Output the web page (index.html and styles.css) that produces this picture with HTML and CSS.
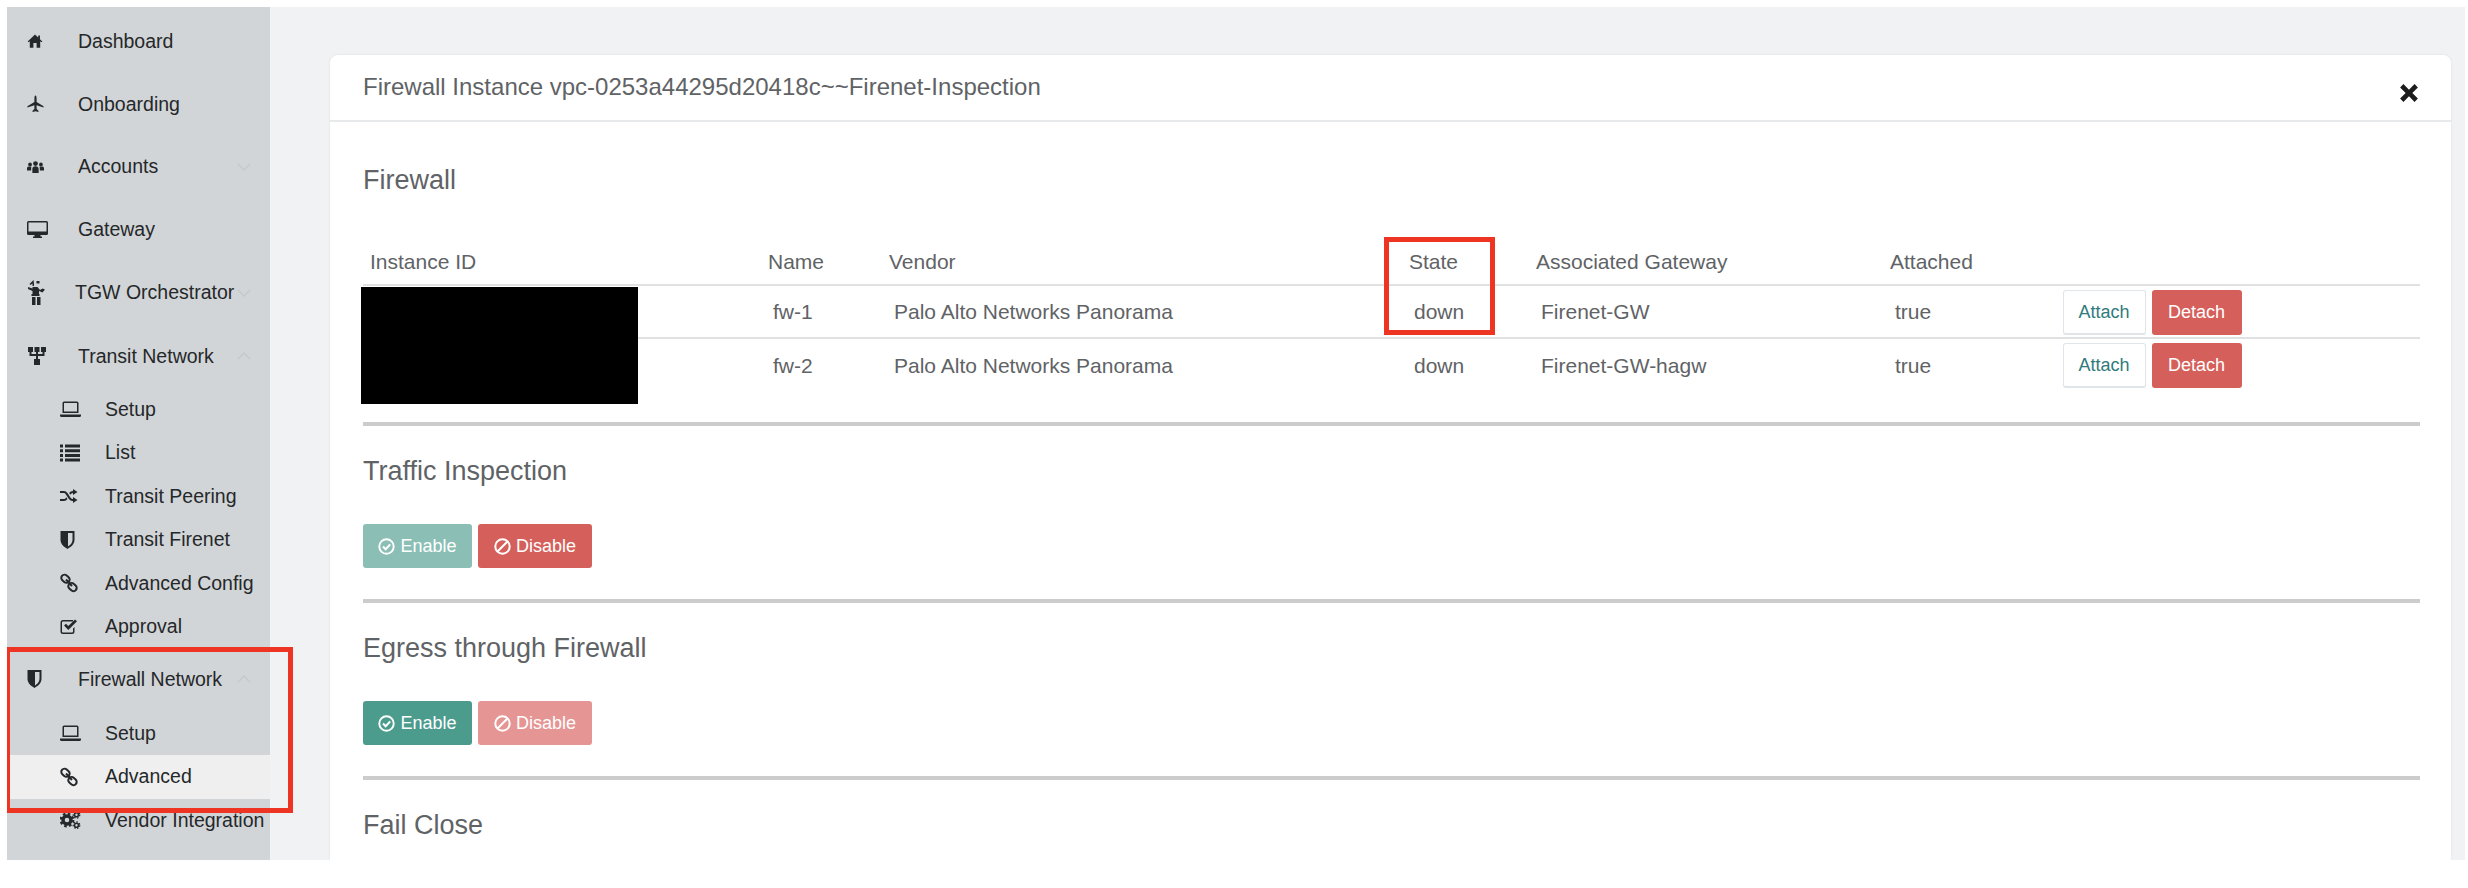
FILE: index.html
```html
<!DOCTYPE html>
<html lang="en">

<head>
    <meta charset="UTF-8">
    <title>Firewall Instance</title>
    <link rel="stylesheet" href="styles.css">
</head>

<body>
    <svg class="sprites" width="0" height="0">
        <symbol id="i-home" viewBox="0 0 20 20"><path d="M10 2 .8 10.6l1 1.1L3.500 10.200V18.500H8V12.500H12V18.500H16.500V10.200l1.700 1.500 1-1.100-3-2.800V3H14V5.500Z"/></symbol>
        <symbol id="i-plane" viewBox="0 0 20 20"><path d="M10 0c1 0 1.300 2 1.300 4v3.500l8.200 5V14l-8.200-2.500V16l2.200 2v1.500L10 18.500l-3.500 1V18l2.200-2v-4.500L.5 14v-1.500l8.200-5V4C8.700 2 9 0 10 0Z"/></symbol>
        <symbol id="i-users" viewBox="0 0 20 16"><circle cx="10" cy="4" r="2.800"/><circle cx="3.600" cy="5" r="2.200"/><circle cx="16.400" cy="5" r="2.200"/><path d="M6.300 15V10c0-2 1.500-3 3.700-3s3.700 1 3.700 3v5ZM0 12V9.500C0 8 1.200 7.500 3.500 7.500c.7 0 1.300.1 1.800.3-.3.6-.4 1.300-.4 2.200V12ZM20 12V9.500c0-1.500-1.200-2-3.500-2-.7 0-1.300.1-1.800.3.300.6.4 1.300.4 2.200V12Z"/></symbol>
        <symbol id="i-desktop" viewBox="0 0 21 18"><path fill-rule="evenodd" d="M1.500 0h18A1.500 1.500 0 0 1 21 1.500v11a1.500 1.500 0 0 1-1.500 1.500H13.500v1.500H15V17H6v-1.500H7.500V14H1.500A1.500 1.500 0 0 1 0 12.500v-11A1.500 1.500 0 0 1 1.500 0ZM1.500 1.500V10.500H19.500V1.500Z"/></symbol>
        <symbol id="i-tgw" viewBox="0 0 18 25"><path d="M6 0 2 4l1 1 2-1.500V6H6.500V3.500ZM9 1h3v2.500H9ZM.5 7 5 8.500V7H10l2.500 3L15 8.500l2.500 1L15 12.500 11.500 11V14H12v2H4v-2H5V11L.5 9Z"/><rect x="4.500" y="17" width="3.500" height="8"/><rect x="9.500" y="17" width="3.500" height="8"/></symbol>
        <symbol id="i-sitemap" viewBox="0 0 20 18"><path d="M1 0H6V5H4.500V7H9V5H7.500V0H12.500V5H11V7H15.500V5H14V0H19V5H17.500V9H11V12H13V18H7V12H9V9H2.500V5H1Z"/></symbol>
        <symbol id="i-laptop" viewBox="0 0 21 17"><path fill-rule="evenodd" d="M4 1h13a1.500 1.500 0 0 1 1.500 1.500V12.500H2.500V2.500A1.500 1.500 0 0 1 4 1ZM4 2.500V11H17V2.500ZM0 14H21V15a1.500 1.500 0 0 1-1.500 1.500H1.500A1.500 1.500 0 0 1 0 15Z"/></symbol>
        <symbol id="i-list" viewBox="0 0 20 17"><path d="M0 0H3V3H0ZM5 0H20V3H5ZM0 4.700H3V7.700H0ZM5 4.700H20V7.700H5ZM0 9.400H3V12.400H0ZM5 9.400H20V12.400H5ZM0 14H3V17H0ZM5 14H20V17H5Z"/></symbol>
        <symbol id="i-random" viewBox="0 0 18 15"><path d="M0 2.500H4C6 2.500 7 3.800 8.500 6 10 8.500 11 10.500 13 10.500V8.500L17.500 11.500 13 14.500V12.500C10 12.500 8.500 10 7 7.700 6 6 5.200 4.500 4 4.500H0ZM0 10.500H4C5 10.500 5.700 9.700 6.300 8.700L7.500 10.500C6.500 11.800 5.500 12.500 4 12.500H0ZM13 .5 17.500 3.500 13 6.500V4.500C11.800 4.500 11 5.300 10.300 6.300L9.100 4.500C10.200 3.300 11.300 2.500 13 2.500Z"/></symbol>
        <symbol id="i-shield" viewBox="0 0 15 18"><path fill-rule="evenodd" d="M.5 0h14v9c0 4.500-4.500 7.500-7 9-2.500-1.500-7-4.500-7-9ZM8 2V15.500C10 14.200 12.500 12 12.500 9V2Z"/></symbol>
        <symbol id="i-link" viewBox="0 0 18 18"><g fill="none" stroke="currentColor" stroke-width="2"><rect x="1" y="1.500" width="9" height="6.500" rx="3.200" transform="rotate(42 5.500 4.700)"/><rect x="8" y="9.800" width="9" height="6.500" rx="3.200" transform="rotate(42 12.500 13)"/><path d="M6 5.500 12 12"/></g></symbol>
        <symbol id="i-check-square" viewBox="0 0 18 16"><path fill-rule="evenodd" d="M3 1H13V2.500H3A1 1 0 0 0 2 3.500V12.500A1 1 0 0 0 3 13.500H12A1 1 0 0 0 13 12.500V9.500L14.500 8V12.500A2.500 2.500 0 0 1 12 15H3A2.500 2.500 0 0 1 .5 12.500V3.500A2.500 2.500 0 0 1 3 1Z"/><path d="M4 6.500 6 4.700 8.300 7 15 .5 17 2.300 8.300 11Z"/></symbol>
        <symbol id="i-gears" viewBox="0 0 21 18"><g fill="none" stroke="currentColor"><circle cx="7" cy="9" r="4" stroke-width="3.400"/><circle cx="7" cy="9" r="6.300" stroke-width="2.200" stroke-dasharray="2.600 2.350"/><circle cx="16.500" cy="3.800" r="2" stroke-width="1.600"/><circle cx="16.500" cy="14.200" r="2" stroke-width="1.600"/><circle cx="16.500" cy="3.800" r="3.300" stroke-width="1.200" stroke-dasharray="1.500 1.500"/><circle cx="16.500" cy="14.200" r="3.300" stroke-width="1.200" stroke-dasharray="1.500 1.500"/></g></symbol>
        <symbol id="i-check-circle" viewBox="0 0 16 16"><g fill="none" stroke="currentColor" stroke-width="1.800"><circle cx="8" cy="8" r="6.800"/><path d="M4.700 8 7.200 10.500 11.500 6" stroke-width="2"/></g></symbol>
        <symbol id="i-ban" viewBox="0 0 16 16"><g fill="none" stroke="currentColor" stroke-width="1.900"><circle cx="8" cy="8" r="6.800"/><path d="M3.300 12.700 12.700 3.300"/></g></symbol>
    </svg>

    <div class="frame">
        <nav class="sidebar">
            <a class="nav-item"><span class="ico"><svg class="icon w16"><use href="#i-home"/></svg></span>Dashboard</a>
            <a class="nav-item"><span class="ico"><svg class="icon w17"><use href="#i-plane"/></svg></span>Onboarding</a>
            <a class="nav-item"><span class="ico"><svg class="icon w17"><use href="#i-users"/></svg></span>Accounts<svg class="chev" viewBox="0 0 14 8"><path d="M1 1 7 7 13 1"/></svg></a>
            <a class="nav-item"><span class="ico"><svg class="icon w21"><use href="#i-desktop"/></svg></span>Gateway</a>
            <a class="nav-item tight"><span class="ico"><svg class="icon w19"><use href="#i-tgw"/></svg></span>TGW Orchestrator<svg class="chev" viewBox="0 0 14 8"><path d="M1 1 7 7 13 1"/></svg></a>
            <a class="nav-item open"><span class="ico"><svg class="icon w20"><use href="#i-sitemap"/></svg></span>Transit Network<svg class="chev" viewBox="0 0 14 8"><path d="M1 7 7 1 13 7"/></svg></a>

            <a class="sub-item"><span class="ico"><svg class="icon w21"><use href="#i-laptop"/></svg></span>Setup</a>
            <a class="sub-item"><span class="ico"><svg class="icon w20"><use href="#i-list"/></svg></span>List</a>
            <a class="sub-item"><span class="ico"><svg class="icon w18"><use href="#i-random"/></svg></span>Transit Peering</a>
            <a class="sub-item"><span class="ico"><svg class="icon w15"><use href="#i-shield"/></svg></span>Transit Firenet</a>
            <a class="sub-item"><span class="ico"><svg class="icon w18"><use href="#i-link"/></svg></span>Advanced Config</a>
            <a class="sub-item"><span class="ico"><svg class="icon w18"><use href="#i-check-square"/></svg></span>Approval</a>

            <a class="nav-item open last"><span class="ico"><svg class="icon w15"><use href="#i-shield"/></svg></span>Firewall Network<svg class="chev" viewBox="0 0 14 8"><path d="M1 7 7 1 13 7"/></svg></a>
            <a class="sub-item"><span class="ico"><svg class="icon w21"><use href="#i-laptop"/></svg></span>Setup</a>
            <a class="sub-item active"><span class="ico"><svg class="icon w18"><use href="#i-link"/></svg></span>Advanced</a>
            <a class="sub-item"><span class="ico"><svg class="icon w21"><use href="#i-gears"/></svg></span>Vendor Integration</a>

            <div class="callout callout-nav"></div>
        </nav>

        <main class="content">
            <div class="card">
                <header class="card-header">
                    <h2>Firewall Instance vpc-0253a44295d20418c~~Firenet-Inspection</h2>
                    <svg class="close" viewBox="0 0 18 18"><path d="M4 1 9 6 14 1 17 4 12 9 17 14 14 17 9 12 4 17 1 14 6 9 1 4Z"/></svg>
                </header>

                <div class="card-body">
                    <h3 class="first">Firewall</h3>

                    <div class="table-wrap">
                        <table>
                            <thead>
                                <tr>
                                    <th class="c-id">Instance ID</th>
                                    <th class="c-name">Name</th>
                                    <th class="c-vendor">Vendor</th>
                                    <th class="c-state">State</th>
                                    <th class="c-gw">Associated Gateway</th>
                                    <th class="c-att">Attached</th>
                                    <th></th>
                                </tr>
                            </thead>
                            <tbody>
                                <tr>
                                    <td></td>
                                    <td>fw-1</td>
                                    <td>Palo Alto Networks Panorama</td>
                                    <td>down</td>
                                    <td>Firenet-GW</td>
                                    <td>true</td>
                                    <td class="actions"><button class="btn-sm attach">Attach</button><button class="btn-sm detach">Detach</button></td>
                                </tr>
                                <tr>
                                    <td></td>
                                    <td>fw-2</td>
                                    <td>Palo Alto Networks Panorama</td>
                                    <td>down</td>
                                    <td>Firenet-GW-hagw</td>
                                    <td>true</td>
                                    <td class="actions"><button class="btn-sm attach">Attach</button><button class="btn-sm detach">Detach</button></td>
                                </tr>
                            </tbody>
                        </table>
                        <div class="redacted"></div>
                        <div class="callout callout-state"></div>
                    </div>

                    <section class="block">
                        <h3>Traffic Inspection</h3>
                        <div class="btn-row">
                            <button class="btn enable faded"><svg class="btn-icon"><use href="#i-check-circle"/></svg>Enable</button>
                            <button class="btn disable"><svg class="btn-icon"><use href="#i-ban"/></svg>Disable</button>
                        </div>
                    </section>

                    <section class="block">
                        <h3>Egress through Firewall</h3>
                        <div class="btn-row">
                            <button class="btn enable"><svg class="btn-icon"><use href="#i-check-circle"/></svg>Enable</button>
                            <button class="btn disable faded"><svg class="btn-icon"><use href="#i-ban"/></svg>Disable</button>
                        </div>
                    </section>

                    <section class="block">
                        <h3>Fail Close</h3>
                    </section>
                </div>
            </div>
        </main>
    </div>
</body>

</html>
```

FILE: styles.css
```css
* {
    box-sizing: border-box;
}

body {
    background-color: #fff;
    color: #5f6366;
    font-family: "Liberation Sans", Arial, sans-serif;
    margin: 0;
    overflow: hidden;
}

.sprites {
    position: absolute;
}

.frame {
    display: flex;
    height: 853px;
    margin: 7px 3px 0 7px;
    overflow: hidden;
}

/* sidebar */
.sidebar {
    background-color: #d2d5d7;
    color: #25282a;
    flex: 0 0 263px;
    font-size: 19.500px;
    padding-top: 3px;
    position: relative;
}

.nav-item,
.sub-item {
    align-items: center;
    display: flex;
    white-space: nowrap;
}

.nav-item {
    height: 62.800px;
    padding-left: 20px;
}

.nav-item.open {
    margin-top: 1px;
    margin-bottom: -.500px;
}

.nav-item.last {
    margin-top: -.500px;
    margin-bottom: 1px;
}

.ico {
    display: flex;
    flex: 0 0 51px;
}

.nav-item.tight .ico {
    flex-basis: 48px;
}

.sub-item {
    height: 43.500px;
    padding-left: 53px;
}

.sub-item .ico {
    flex-basis: 45px;
}

.sub-item.active {
    background-color: #efefef;
}

.icon {
    fill: currentColor;
    flex: none;
    height: 20px;
}

.w15 { width: 15px; }
.w16 { width: 16px; }
.w17 { width: 17px; }
.w18 { width: 18px; }
.w19 { width: 19px; height: 25px; }
.w20 { width: 20px; }
.w21 { width: 21px; }

.chev {
    fill: none;
    flex: none;
    height: 8px;
    margin-left: auto;
    margin-right: 19px;
    stroke: #c6c9cb;
    stroke-width: 1.500;
    width: 14px;
}

/* red annotation boxes */
.callout {
    border: 5px solid #ee3524;
    pointer-events: none;
    position: absolute;
}

.callout-nav {
    height: 166px;
    left: -2px;
    top: 640px;
    width: 288px;
}

.callout-state {
    height: 98px;
    left: 1021px;
    top: 0;
    width: 111px;
}

/* main */
.content {
    background-color: #f0f2f4;
    flex: 1;
    padding: 48px 14px 0 60px;
}

.card {
    background-color: #fff;
    border-radius: 8px 8px 0 0;
    box-shadow: 0 0 3px rgba(0, 0, 0, .08);
    height: 100%;
    overflow: hidden;
}

.card-header {
    align-items: flex-start;
    border-bottom: 2px solid #e8e9ea;
    display: flex;
    height: 67px;
    justify-content: space-between;
    padding: 18px 32px 0 33px;
}

.card-header h2 {
    font-size: 24px;
    font-weight: normal;
    line-height: 28px;
    margin: 0;
}

.close {
    fill: #1c1c1c;
    height: 20px;
    margin-top: 10px;
    width: 20px;
}

.card-body {
    padding: 0 31px 0 33px;
}

h3 {
    font-size: 27px;
    font-weight: normal;
    line-height: 30px;
    margin: 0;
}

h3.first {
    margin-top: 43px;
}

/* table */
.table-wrap {
    margin-top: 42px;
    position: relative;
}

table {
    border-collapse: collapse;
    font-size: 21px;
    table-layout: fixed;
    width: 100%;
}

th {
    border-bottom: 2px solid #dfe1e3;
    font-weight: normal;
    height: 48px;
    padding: 2px 0 0 7px;
    text-align: left;
}

td {
    border-bottom: 2px solid #dfe1e3;
    height: 53px;
    padding: 0 0 0 12px;
}

tbody tr:last-child td {
    border-bottom-color: transparent;
    padding-top: 2px;
}

.c-id { width: 398px; }
.c-name { width: 121px; }
.c-vendor { width: 520px; }
.c-state { width: 127px; }
.c-gw { width: 354px; }
.c-att { width: 173px; }

td.actions,
tbody tr:last-child td.actions {
    padding: 2px 0 0 6.500px;
}

.redacted {
    background-color: #000;
    height: 117px;
    left: -2px;
    position: absolute;
    top: 50px;
    width: 277px;
}

.btn-sm {
    border-radius: 3px;
    font-family: inherit;
    font-size: 18px;
    height: 45px;
    margin-right: 6px;
    padding: 0;
    vertical-align: middle;
}

.attach {
    background-color: #fff;
    border: 1px solid #dfe5e8;
    border-bottom-width: 2px;
    color: #2f7b7d;
    width: 83px;
}

.detach {
    background-color: #d5605b;
    border: 0;
    color: #fff;
    width: 90px;
}

/* sections */
.block {
    border-top: 4px solid #cccccc;
    margin-top: 31px;
    padding-top: 30px;
}

.table-wrap + .block {
    margin-top: 30px;
}

.btn-row {
    display: flex;
    gap: 6px;
    margin-top: 38px;
}

.btn {
    align-items: center;
    border: 0;
    border-radius: 3px;
    color: #fff;
    display: flex;
    font-family: inherit;
    font-size: 18px;
    gap: 5px;
    height: 44px;
    justify-content: center;
    padding: 0;
}

.btn-icon {
    height: 17px;
    width: 17px;
}

.enable {
    background-color: #4c9c8e;
    width: 109px;
}

.enable.faded {
    background-color: #8bbfb5;
}

.disable {
    background-color: #d5605b;
    width: 114px;
}

.disable.faded {
    background-color: #e59694;
}
```
